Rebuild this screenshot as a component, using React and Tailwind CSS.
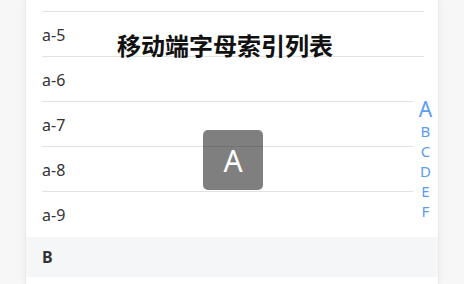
import React from 'react';

const items = ['a-4', 'a-5', 'a-6', 'a-7', 'a-8', 'a-9'];
const letters = ['B', 'C', 'D', 'E', 'F'];

const App = () => {
  return (
    <div className="h-[284px] w-full bg-[#f7f7f8] overflow-hidden" style={{ fontFamily: '"Noto Sans", "Noto Sans CJK SC", sans-serif' }}>
      <div className="relative mx-auto h-full w-[414px] bg-white border-x border-[#ebebeb] shadow-[0_0_8px_rgba(0,0,0,0.06)] overflow-hidden">
        <div className="mt-[-33px]">
          {items.map((item, i) => (
            <div key={item} className="pl-4 pr-[14px]">
              <div className={`h-[45px] flex items-center pt-[1px] text-[16px] text-[#333] ${i < items.length - 1 ? 'border-b border-[#e2e2e2]' : ''}`}>
                {item}
              </div>
            </div>
          ))}
          <div className="h-[40px] bg-[#f5f6f8] pl-4 flex items-center text-[16px] font-bold text-[#333]">B</div>
          <div className="h-[45px] bg-white" />
        </div>

        <h1 className="absolute left-[91px] top-[32px] text-[24px] leading-[26px] font-bold text-[#111]" style={{ fontFamily: '"Noto Sans CJK SC", sans-serif' }}>
          移动端字母索引列表
        </h1>

        <div className="absolute right-0 top-[97px] w-[25px] bg-white flex flex-col items-center pb-2 text-[#5a9cf6]">
          <span className="text-[21px] leading-[24px]">A</span>
          {letters.map((l) => (
            <span key={l} className="text-[15px] leading-[20px]">{l}</span>
          ))}
        </div>

        <div className="absolute left-[177px] top-[130px] w-[60px] h-[60px] rounded-[5px] bg-[rgba(0,0,0,0.5)] flex items-center justify-center text-white text-[30px]">
          A
        </div>
      </div>
    </div>
  );
};

export default App;
